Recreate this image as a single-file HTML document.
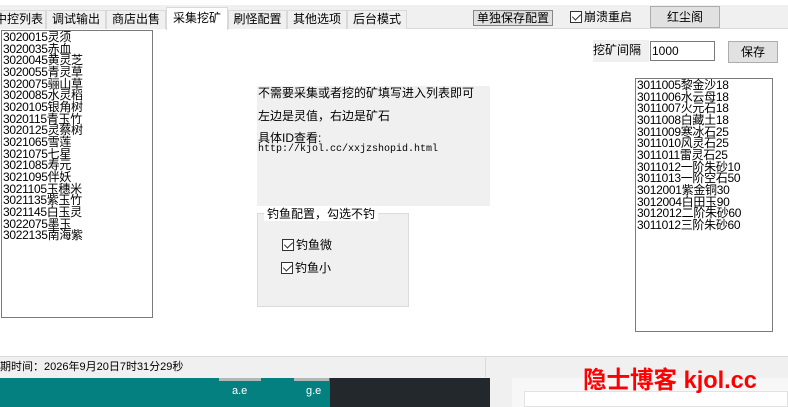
<!DOCTYPE html>
<html><head><meta charset="utf-8"><style>
*{box-sizing:border-box;margin:0;padding:0}
body{width:788px;height:407px;overflow:hidden;background:#fff;position:relative;font-family:"Liberation Sans","Noto Sans CJK SC",sans-serif;font-size:12px;color:#000}
.a{position:absolute}
.tab{position:absolute;top:10px;height:19px;border:1px solid #d9d9d9;border-bottom:none;background:#f0f0f0;font-size:12px;line-height:17px;text-align:center}
.list{position:absolute;background:#fff;border:1px solid #7a7a7a;font-size:12px;line-height:11.65px;padding:1px 0 0 1px;white-space:nowrap;letter-spacing:-0.3px}
.btn{position:absolute;background:#e1e1e1;border:1px solid #adadad;text-align:center;font-size:12px}
.cb{display:inline-block;width:12px;height:12px;border:1px solid #333;background:#fff;vertical-align:-2px;position:relative;margin-right:2px}
.cb:after{content:"";position:absolute;left:3px;top:0px;width:4px;height:7px;border:solid #333;border-width:0 1.5px 1.5px 0;transform:rotate(45deg)}
</style></head><body>
<div class="a" style="left:0;top:5px;width:788px;height:24px;background:#f0f0f0;border-bottom:1px solid #dadada"></div>
<div class="tab" style="left:-8px;width:54px">中控列表</div>
<div class="tab" style="left:46px;width:60px">调试输出</div>
<div class="tab" style="left:106px;width:60px">商店出售</div>
<div class="tab" style="left:166px;width:62px;top:7px;height:23px;background:#fff;line-height:20px">采集挖矿</div>
<div class="tab" style="left:228px;width:59px">刷怪配置</div>
<div class="tab" style="left:287px;width:60px">其他选项</div>
<div class="tab" style="left:347px;width:60px">后台模式</div>
<div class="btn" style="left:473px;top:10px;width:80px;height:16px;line-height:14px;border-color:#888">单独保存配置</div>
<div class="a" style="left:570px;top:8px;font-size:12px"><span class="cb"></span>崩溃重启</div>
<div class="btn" style="left:650px;top:6px;width:70px;height:22px;line-height:20px">红尘阁</div>

<div class="list" style="left:1px;top:30px;width:152px;height:288px">3020015灵须<br>3020035赤血<br>3020045黄灵芝<br>3020055青灵草<br>3020075骊山草<br>3020085水灵稻<br>3020105银角树<br>3020115青玉竹<br>3020125灵蔡树<br>3021065雪莲<br>3021075七星<br>3021085寿元<br>3021095伴妖<br>3021105玉穗米<br>3021135紫玉竹<br>3021145白玉灵<br>3022075墨玉<br>3022135南海紫</div>

<div class="a" style="left:593px;top:40px;width:56px;height:22px;background:#f0f0f0;line-height:20px">挖矿间隔</div>
<div class="a" style="left:650px;top:41px;width:65px;height:20px;border:1px solid #7a7a7a;line-height:18px;padding-left:1px">1000</div>
<div class="btn" style="left:728px;top:41px;width:50px;height:22px;line-height:20px">保存</div>

<div class="a" style="left:257px;top:86px;width:233px;height:120px;background:#f0f0f0;padding:0 0 0 1px">
<div style="line-height:14px">不需要采集或者挖的矿填写进入列表即可</div>
<div style="margin-top:9px;line-height:14px">左边是灵值，右边是矿石</div>
<div style="margin-top:9px;line-height:12px">具体ID查看:</div>
<div style="font-family:'Liberation Mono',monospace;font-size:10px;line-height:11px">http://kjol.cc/xxjzshopid.html</div>
</div>
<div class="a" style="left:257px;top:213px;width:152px;height:94px;background:#f0f0f0;border:1px solid #dcdcdc"></div>
<div class="a" style="left:264px;top:207px;background:#fff;padding:0 3px;line-height:14px">钓鱼配置，勾选不钓</div>
<div class="a" style="left:282px;top:236px"><span class="cb"></span>钓鱼微</div>
<div class="a" style="left:281px;top:259px"><span class="cb"></span>钓鱼小</div>

<div class="list" style="left:635px;top:78px;width:138px;height:254px">3011005黎金沙18<br>3011006水云母18<br>3011007火元石18<br>3011008白藏土18<br>3011009寒冰石25<br>3011010风灵石25<br>3011011雷灵石25<br>3011012一阶朱砂10<br>3011013一阶空石50<br>3012001紫金铜30<br>3012004白田玉90<br>3012012二阶朱砂60<br>3011012三阶朱砂60</div>

<div class="a" style="left:0;top:356px;width:788px;height:22px;background:#f0f0f0;border-top:1px solid #d9d9d9"></div>
<div class="a" style="left:485px;top:358px;width:1px;height:19px;background:#d9d9d9"></div>
<div class="a" style="left:0;top:360px;font-size:11px;line-height:14px">期时间：2026年9月20日7时31分29秒</div>

<div class="a" style="left:0;top:378px;width:330px;height:29px;background:#058080"></div>
<div class="a" style="left:219px;top:378px;width:42px;height:3px;background:#b0b8b8"></div>
<div class="a" style="left:294px;top:378px;width:35px;height:3px;background:#b0b8b8"></div>
<div class="a" style="left:232px;top:385px;color:#fff;font-size:11px">a.e</div>
<div class="a" style="left:306px;top:385px;color:#fff;font-size:11px">g.e</div>
<div class="a" style="left:330px;top:378px;width:160px;height:29px;background:#22282c"></div>
<div class="a" style="left:490px;top:378px;width:298px;height:29px;background:#f0f0f0"></div>
<div class="a" style="left:512px;top:378px;width:276px;height:29px;background:#f7f7f7"></div>
<div class="a" style="left:524px;top:391px;width:264px;height:16px;background:#fff;border:1px solid #e2e2e2"></div>
<div class="a" style="left:583px;top:367px;color:#f00;font-size:24px;font-weight:bold;line-height:28px;transform:scaleX(0.98);transform-origin:left">隐士博客 kjol.cc</div>
</body></html>
